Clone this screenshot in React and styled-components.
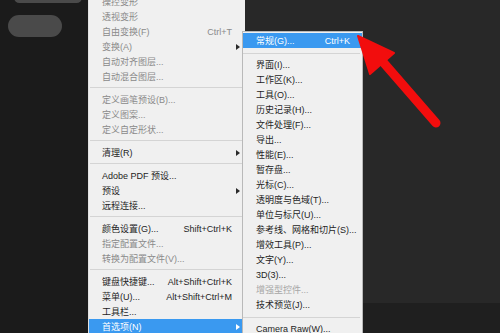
import React from 'react'
import styled, { createGlobalStyle } from 'styled-components'

const Global = createGlobalStyle`
  html, body { margin: 0; padding: 0; background: #262626; }
  * { box-sizing: border-box; }
`

const editItems = [
    { label: '操控变形', off: true },
    { label: '透视变形', off: true },
    { label: '自由变换(F)', key: 'Ctrl+T', off: true },
    { label: '变换(A)', sub: true, off: true },
    { label: '自动对齐图层...', off: true },
    { label: '自动混合图层...', off: true },
    'sep',
    { label: '定义画笔预设(B)...', off: true },
    { label: '定义图案...', off: true },
    { label: '定义自定形状...', off: true },
    'sep',
    { label: '清理(R)', sub: true },
    'sep',
    { label: 'Adobe PDF 预设...' },
    { label: '预设', sub: true },
    { label: '远程连接...' },
    'sep',
    { label: '颜色设置(G)...', key: 'Shift+Ctrl+K' },
    { label: '指定配置文件...', off: true },
    { label: '转换为配置文件(V)...', off: true },
    'sep',
    { label: '键盘快捷键...', key: 'Alt+Shift+Ctrl+K' },
    { label: '菜单(U)...', key: 'Alt+Shift+Ctrl+M' },
    { label: '工具栏...' },
    { label: '首选项(N)', sub: true, active: true },
]

const prefItems = [
    { label: '常规(G)...', key: 'Ctrl+K', active: true },
    'sep',
    { label: '界面(I)...' },
    { label: '工作区(K)...' },
    { label: '工具(O)...' },
    { label: '历史记录(H)...' },
    { label: '文件处理(F)...' },
    { label: '导出...' },
    { label: '性能(E)...' },
    { label: '暂存盘...' },
    { label: '光标(C)...' },
    { label: '透明度与色域(T)...' },
    { label: '单位与标尺(U)...' },
    { label: '参考线、网格和切片(S)...' },
    { label: '增效工具(P)...' },
    { label: '文字(Y)...' },
    { label: '3D(3)...' },
    { label: '增强型控件...', off: true },
    { label: '技术预览(J)...' },
    'sep',
    { label: 'Camera Raw(W)...' },
]

const App = () => {
    return (
        <Page>
            <Global />
            <Sidebar>
                <Pill $w={68} $h={11} $x={14} />
                <Pill $w={54} $h={22} $x={8} />
            </Sidebar>
            <Menu>
                {editItems.map((it, i) =>
                    it === 'sep' ? <Separator key={i} /> : (
                        <Row key={i} $off={it.off} $active={it.active}>
                            <span>{it.label}</span>
                            <Shortcut>{it.key}</Shortcut>
                            <span>{it.sub && <SubArrow $active={it.active} />}</span>
                        </Row>
                    )
                )}
            </Menu>
            <Workspace>
                <Canvas />
                <Footer />
            </Workspace>
            <SubMenu>
                {prefItems.map((it, i) =>
                    it === 'sep' ? <Separator key={i} $sub /> : (
                        <SubRow key={i} $off={it.off} $active={it.active}>
                            <span>{it.label}</span>
                            <Shortcut>{it.key}</Shortcut>
                        </SubRow>
                    )
                )}
            </SubMenu>
            <Pointer width="500" height="333" viewBox="0 0 500 333">
                <line x1="383" y1="62" x2="436" y2="123" stroke="#f20d0d" strokeWidth="9" strokeLinecap="round" />
                <polygon points="358,36 394,53 370,74" fill="#f20d0d" stroke="#f20d0d" strokeWidth="2" strokeLinejoin="round" />
            </Pointer>
        </Page>
    )
}

let Page = styled.div`
position: relative;
display: flex;
width: 500px;
height: 333px;
overflow: hidden;
background: #262626;
font-family: "Liberation Sans", "Noto Sans CJK SC", sans-serif;
font-size: 9px;
`

let Sidebar = styled.div`
width: 88px;
flex: none;
background: #1b1b1b;
display: flex;
flex-direction: column;
gap: 12px;
margin-top: -8px;
`

let Pill = styled.div`
width: ${p => p.$w}px;
height: ${p => p.$h}px;
margin-left: ${p => p.$x}px;
border-radius: 12px;
background: #4a4a4a;
`

let Menu = styled.div`
width: 157px;
flex: none;
margin-top: -6px;
background: #f0f0f0;
border-left: 1px solid #e2e2e2;
display: flex;
flex-direction: column;
`

let Row = styled.div`
display: grid;
grid-template-columns: 1fr auto 12px;
align-items: center;
height: 15px;
flex: none;
padding: 0 1px 0 13px;
white-space: nowrap;
color: ${p => p.$active ? '#ffffff' : p.$off ? '#8a8a8a' : '#1e1e1e'};
background: ${p => p.$active ? '#3a99f0' : 'transparent'};
& > span:last-child {
    display: flex;
    justify-content: center;
}
`

let SubRow = styled(Row)`
grid-template-columns: 1fr auto;
padding: 0 12px 0 13px;
color: ${p => p.$active ? '#ffffff' : p.$off ? '#a6a6a6' : '#1e1e1e'};
& > span:last-child { display: block; }
`

let Shortcut = styled.span`
text-align: right;
`

let SubArrow = styled.i`
width: 0;
height: 0;
border-top: 3.5px solid transparent;
border-bottom: 3.5px solid transparent;
border-left: 4px solid ${p => p.$active ? '#ffffff' : '#2a2a2a'};
`

let Separator = styled.div`
flex: none;
height: 1px;
margin: ${p => p.$sub ? '5px 2px 3px 0' : '3px 2px 4px 1px'};
background: #d4d4d4;
`

let Workspace = styled.div`
flex: 1;
display: flex;
flex-direction: column;
`

let Canvas = styled.div`
flex: 1;
background: #282828;
`

let Footer = styled.div`
height: 30px;
background: #1f1f1f;
`

let SubMenu = styled.div`
position: absolute;
left: 242px;
top: 31px;
width: 121px;
height: 320px;
padding-top: 1px;
background: #f0f0f0;
border: 1px solid #b9b9b9;
display: flex;
flex-direction: column;
`

let Pointer = styled.svg`
position: absolute;
left: 0;
top: 0;
pointer-events: none;
`

export default App
